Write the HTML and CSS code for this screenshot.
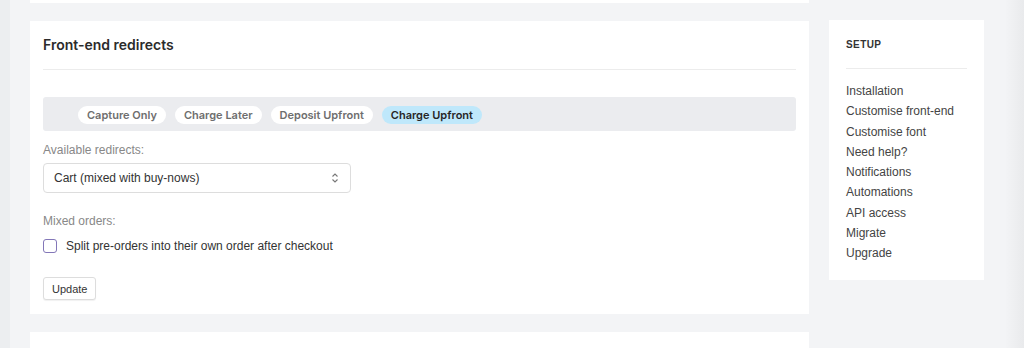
FILE: index.html
```html
<!DOCTYPE html>
<html lang="en">

<head>
    <meta charset="UTF-8">
    <title>Front-end redirects</title>
    <link rel="stylesheet" href="styles.css">
</head>

<body>
    <div class="page">
        <div class="edge-left"></div>
        <div class="content">
            <div class="top-rest"></div>
            <div class="columns">
                <div class="main">
                    <div class="card">
                        <h2 class="card-title">Front-end redirects</h2>
                        <hr class="rule">
                        <div class="tabs">
                            <span class="pill">Capture Only</span>
                            <span class="pill">Charge Later</span>
                            <span class="pill">Deposit Upfront</span>
                            <span class="pill active">Charge Upfront</span>
                        </div>
                        <p class="label">Available redirects:</p>
                        <div class="select">
                            <span>Cart (mixed with buy-nows)</span>
                            <svg width="8" height="12" viewBox="0 0 8 12">
                                <path d="M1.5 4.5 4 2l2.5 2.5M1.5 7.5 4 10l2.5-2.5" fill="none" stroke="#777" stroke-width="1.1"/>
                            </svg>
                        </div>
                        <p class="label label-gap">Mixed orders:</p>
                        <label class="check">
                            <span class="box"></span>
                            Split pre-orders into their own order after checkout
                        </label>
                        <button class="btn">Update</button>
                    </div>
                    <div class="card card-next"></div>
                </div>
                <div class="side">
                    <div class="side-card">
                        <h3 class="side-title">SETUP</h3>
                        <hr class="rule side-rule">
                        <ul class="links">
                            <li>Installation</li>
                            <li>Customise front-end</li>
                            <li>Customise font</li>
                            <li>Need help?</li>
                            <li>Notifications</li>
                            <li>Automations</li>
                            <li>API access</li>
                            <li>Migrate</li>
                            <li>Upgrade</li>
                        </ul>
                    </div>
                </div>
            </div>
        </div>
        <div class="edge-right"></div>
    </div>
</body>

</html>
```

FILE: styles.css
```css
* {
    margin: 0;
    padding: 0;
    box-sizing: border-box;
}

body {
    background: #f3f4f6;
    font-family: "Liberation Sans", Arial, sans-serif;
    color: #333;
    height: 348px;
    overflow: hidden;
}

.page {
    display: flex;
    height: 348px;
}

.edge-left {
    width: 10px;
    background: #eceef0;
}

.edge-right {
    width: 19px;
    background: linear-gradient(to right, #f3f4f6, #e9eaec);
}

.content {
    flex: 1;
    padding-left: 20px;
}

.top-rest {
    width: 779px;
    height: 3px;
    background: #fff;
}

.columns {
    display: flex;
    gap: 20px;
    padding-top: 17px;
}

.main {
    width: 779px;
    padding-top: 1px;
}

.card {
    background: #fff;
    padding: 13px 13px 14px;
}

.card-next {
    margin-top: 18px;
    height: 16px;
    padding: 0;
}

.card-title {
    font-family: Inter, "Liberation Sans", sans-serif;
    font-size: 14px;
    font-weight: 600;
    line-height: 22px;
    color: #2b2b2b;
}

.rule {
    border: 0;
    border-top: 1px solid #ececec;
    margin-top: 13px;
}

.tabs {
    margin-top: 27px;
    background: #ebecef;
    border-radius: 3px;
    height: 34px;
    padding: 1px 0 0 35px;
    display: flex;
    align-items: center;
    gap: 9px;
}

.pill {
    height: 18px;
    line-height: 18px;
    padding: 0 9px;
    border-radius: 9px;
    background: #fff;
    font-family: Inter, "Liberation Sans", sans-serif;
    font-size: 11px;
    font-weight: 600;
    color: #6e6e6e;
}

.pill.active {
    background: #bfe8fb;
    color: #262626;
}

.label {
    margin-top: 10px;
    font-size: 12px;
    line-height: 18px;
    color: #888;
}

.label-gap {
    margin-top: 19px;
}

.select {
    margin-top: 4px;
    width: 308px;
    height: 30px;
    border: 1px solid #ddd;
    border-radius: 4px;
    display: flex;
    align-items: center;
    justify-content: space-between;
    padding: 0 11px 0 10px;
    font-size: 12px;
    color: #333;
}

.check {
    margin-top: 7px;
    display: flex;
    align-items: center;
    gap: 9px;
    height: 18px;
    font-size: 12px;
    color: #333;
}

.box {
    width: 14px;
    height: 14px;
    border: 1px solid #8377b8;
    border-radius: 3px;
}

.btn {
    display: block;
    margin-top: 22px;
    height: 23px;
    padding: 0 8px;
    background: #fff;
    border: 1px solid #ddd;
    border-radius: 3px;
    box-shadow: 0 1px 1px rgba(0, 0, 0, 0.06);
    font-family: inherit;
    font-size: 11px;
    color: #333;
}

.side {
    width: 155px;
}

.side-card {
    background: #fff;
    padding: 17px 17px 16px;
}

.side-title {
    font-size: 10px;
    font-weight: 700;
    line-height: 16px;
    letter-spacing: 0.4px;
    color: #333;
}

.side-rule {
    margin-top: 15px;
}

.links {
    list-style: none;
    margin-top: 12px;
    font-size: 12px;
    line-height: 20.3px;
    color: #444;
}
```
